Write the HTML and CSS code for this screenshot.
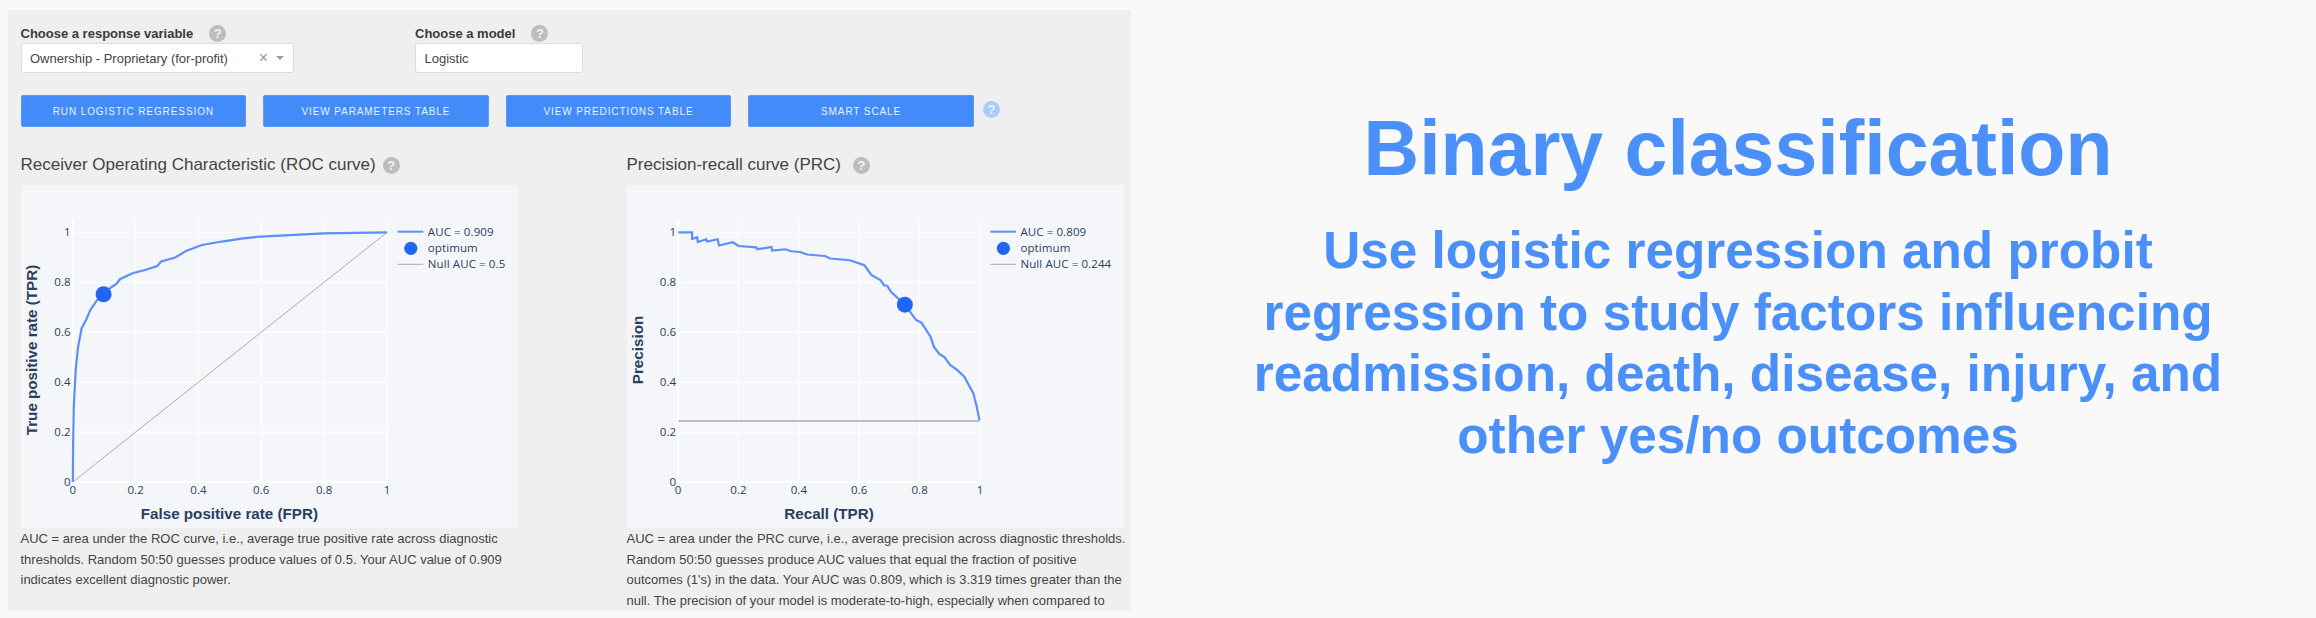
FILE: index.html
```html
<!DOCTYPE html>
<html lang="en">
<head>
  <meta charset="UTF-8">
  <meta name="viewport" content="width=device-width, initial-scale=1.0">
  <title>Binary classification</title>
  <link rel="stylesheet" href="styles.css">
</head>
<body>
  <main class="panel">
    <div class="fields">
      <div class="field field-response">
        <div class="field-label">Choose a response variable <span class="help help-label">?</span></div>
        <div class="select">
          <span class="select-value">Ownership - Proprietary (for-profit)</span>
          <span class="select-clear">×</span>
          <span class="select-caret"></span>
        </div>
      </div>
      <div class="field field-model">
        <div class="field-label">Choose a model <span class="help help-label">?</span></div>
        <div class="select">
          <span class="select-value">Logistic</span>
        </div>
      </div>
    </div>

    <div class="actions">
      <button class="btn">RUN LOGISTIC REGRESSION</button>
      <button class="btn">VIEW PARAMETERS TABLE</button>
      <button class="btn">VIEW PREDICTIONS TABLE</button>
      <button class="btn">SMART SCALE</button>
      <span class="help help-blue">?</span>
    </div>

    <div class="charts">
      <section class="chart-col">
        <h2 class="chart-title">Receiver Operating Characteristic (ROC curve) <span class="help">?</span></h2>
        <svg id="roc" class="plot" viewBox="0 0 497 343"></svg>
        <p class="caption">AUC = area under the ROC curve, i.e., average true positive rate across diagnostic thresholds. Random 50:50 guesses produce values of 0.5. Your AUC value of 0.909 indicates excellent diagnostic power.</p>
      </section>
      <section class="chart-col">
        <h2 class="chart-title">Precision-recall curve (PRC) <span class="help help-gap">?</span></h2>
        <svg id="prc" class="plot" viewBox="0 0 497 343"></svg>
        <p class="caption">AUC = area under the PRC curve, i.e., average precision across diagnostic thresholds. Random 50:50 guesses produce AUC values that equal the fraction of positive outcomes (1's) in the data. Your AUC was 0.809, which is 3.319 times greater than the null. The precision of your model is moderate-to-high, especially when compared to</p>
      </section>
    </div>
  </main>

  <aside class="promo">
    <h1 class="promo-title">Binary classification</h1>
    <p class="promo-text">Use logistic regression and probit regression to study factors influencing readmission, death, disease, injury, and other yes/no outcomes</p>
  </aside>

  <script src="chart.js"></script>
</body>
</html>
```

FILE: styles.css
```css
* {
  box-sizing: border-box;
}
body {
  margin: 0;
  height: 618px;
  overflow: hidden;
  display: flex;
  align-items: flex-start;
  font-family: "Liberation Sans", Arial, sans-serif;
  background-color: #f9f9f9;
  color: #444;
}

/* left app panel */
.panel {
  flex: none;
  width: 1123px;
  height: 601px;
  margin: 10px 0 0 8px;
  padding: 13px 0 0 12.5px;
  background-color: #efefef;
  overflow: hidden;
}
.fields {
  display: flex;
  gap: 121.5px;
}
.field-response {
  width: 273px;
}
.field-model {
  width: 168px;
}
.field-label {
  display: flex;
  align-items: center;
  height: 20px;
  font-size: 13px;
  font-weight: bold;
  color: #3a3a3a;
  white-space: nowrap;
}
.select {
  display: flex;
  align-items: center;
  height: 30px;
  padding: 0 8.5px;
  background-color: #fff;
  border: 1px solid #ddd;
  border-radius: 3px;
  font-size: 13px;
  color: #444;
}
.select-value {
  flex: 1;
}
.select-clear {
  font-size: 16px;
  color: #999;
  margin-right: 8px;
}
.select-caret {
  width: 0;
  height: 0;
  border-left: 4px solid transparent;
  border-right: 4px solid transparent;
  border-top: 4px solid #999;
}

.help {
  display: inline-flex;
  align-items: center;
  justify-content: center;
  width: 17px;
  height: 17px;
  border-radius: 50%;
  background-color: #bdbdbd;
  color: #f4f4f4;
  font-size: 13px;
  font-weight: bold;
  vertical-align: 1px;
}
.help-label {
  margin-left: 16px;
}
.help-gap {
  margin-left: 5px;
}
.help-blue {
  margin: 0 0 3px -8px;
  background-color: #a6cdf8;
}

.actions {
  display: flex;
  align-items: center;
  gap: 17px;
  margin-top: 22px;
}
.btn {
  width: 225.6px;
  height: 32px;
  padding: 0;
  background-color: #428bf9;
  border: 1px solid #5a98f5;
  border-radius: 2px;
  color: #eaf2fe;
  font-family: "Liberation Sans", Arial, sans-serif;
  font-size: 10px;
  letter-spacing: 0.9px;
}

.charts {
  display: flex;
  gap: 109px;
  margin-top: 27px;
}
.chart-col {
  width: 497px;
}
.chart-title {
  display: flex;
  align-items: center;
  gap: 7px;
  height: 22px;
  margin: 0;
  font-size: 17px;
  font-weight: normal;
  color: #444;
  white-space: nowrap;
}
.plot {
  display: block;
  width: 497px;
  height: 343px;
  margin-top: 9px;
  background-color: #f5f6f9;
}
.plot text {
  font-family: "Open Sans", sans-serif;
  font-size: 11.5px;
  letter-spacing: 0.1px;
  fill: #2a3f5f;
}
.plot .axis-title {
  font-family: "Liberation Sans", Arial, sans-serif;
  font-size: 15.2px;
  font-weight: bold;
  letter-spacing: 0;
}
.caption {
  width: 503px;
  margin: 0;
  padding-top: 1px;
  font-size: 13px;
  line-height: 20.5px;
  color: #444;
}

/* right side blurb */
.promo {
  flex: 1;
  padding: 103px 0 0 29px;
  text-align: center;
  color: #4a90f8;
}
.promo-title {
  margin: 0;
  font-size: 77px;
  line-height: 90px;
}
.promo-text {
  width: 1010px;
  margin: 27px auto 0;
  font-size: 51.3px;
  font-weight: bold;
  line-height: 61.7px;
}
```

FILE: chart.js
```js
// Curve points are in axis units, read off the original plots
var rocPoints = [
  [0, 0], [.001, .142], [.003, .302], [.010, .462], [.017, .542], [.028, .615], [.042, .649],
  [.056, .689], [.076, .726], [.098, .752], [.122, .780], [.139, .793], [.150, .812], [.190, .836],
  [.230, .849], [.269, .865], [.281, .883], [.326, .899], [.360, .925], [.411, .949], [.474, .963],
  [.542, .976], [.599, .983], [.735, .992], [.798, .996], [1, 1]
];
var prcPoints = [
  [0, 1], [.046, 1], [.046, .973], [.063, .980], [.065, .961], [.093, .972], [.096, .963],
  [.131, .972], [.135, .947], [.181, .960], [.2, .945], [.259, .940], [.262, .932], [.309, .941],
  [.311, .927], [.356, .932], [.374, .924], [.404, .921], [.427, .911], [.486, .905], [.504, .895],
  [.569, .888], [.617, .868], [.640, .829], [.670, .809], [.682, .788], [.693, .785], [.705, .762],
  [.751, .710], [.788, .649], [.806, .638], [.836, .582], [.847, .542], [.865, .513], [.883, .499],
  [.901, .469], [.924, .449], [.948, .422], [.978, .355], [.989, .302], [.998, .248]
];

var SVG_NS = 'http://www.w3.org/2000/svg';
var CURVE = '#5b8ff9';
var MARKER = '#2166f3';
var NULL_LINE = '#aaaaaa';
var TICKS = [0, .2, .4, .6, .8, 1];

function add(svg, tag, attrs, text) {
  var el = document.createElementNS(SVG_NS, tag);
  Object.keys(attrs).forEach(function (key) {
    el.setAttribute(key, attrs[key]);
  });
  if (text) el.textContent = text;
  svg.appendChild(el);
  return el;
}

function drawChart(id, cfg) {
  var svg = document.getElementById(id);
  var top = 34, y0 = 297, y1 = 47.3;
  var px = function (x) { return cfg.x0 + x * (cfg.x1 - cfg.x0); };
  var py = function (y) { return y0 + y * (y1 - y0); };

  // Grid and tick labels
  TICKS.forEach(function (t) {
    var zero = t === 0;
    add(svg, 'line', { x1: px(t), x2: px(t), y1: top, y2: y0, stroke: '#fff', 'stroke-width': zero ? 2 : 1 });
    add(svg, 'line', { x1: cfg.x0, x2: cfg.x1, y1: py(t), y2: py(t), stroke: '#fff', 'stroke-width': zero ? 2 : 1 });
    add(svg, 'text', { x: px(t), y: 309, 'text-anchor': 'middle' }, String(t));
    add(svg, 'text', { x: cfg.x0 - 2, y: py(t) + 4, 'text-anchor': 'end' }, String(t));
  });

  // Null line sits under the curve
  add(svg, 'line', {
    x1: px(0), y1: py(cfg.nullFrom), x2: px(1), y2: py(cfg.nullTo),
    stroke: NULL_LINE, 'stroke-width': cfg.nullWidth
  });
  add(svg, 'polyline', {
    points: cfg.points.map(function (p) { return px(p[0]) + ',' + py(p[1]); }).join(' '),
    fill: 'none', stroke: CURVE, 'stroke-width': 2.2
  });
  add(svg, 'circle', { cx: px(cfg.optimum[0]), cy: py(cfg.optimum[1]), r: 8, fill: MARKER });

  // Legend
  var lx = cfg.legendX;
  add(svg, 'line', { x1: lx, x2: lx + 25.5, y1: 46.7, y2: 46.7, stroke: CURVE, 'stroke-width': 2 });
  add(svg, 'text', { x: lx + 30, y: 50.7 }, cfg.aucLabel);
  add(svg, 'circle', { cx: lx + 13, cy: 63.3, r: 6.6, fill: MARKER });
  add(svg, 'text', { x: lx + 30, y: 67.3 }, 'optimum');
  add(svg, 'line', { x1: lx, x2: lx + 25.5, y1: 79.3, y2: 79.3, stroke: NULL_LINE, 'stroke-width': 1 });
  add(svg, 'text', { x: lx + 30, y: 83.3 }, cfg.nullLabel);

  // Axis titles
  add(svg, 'text', { class: 'axis-title', x: cfg.titleX, y: 334, 'text-anchor': 'middle' }, cfg.xTitle);
  add(svg, 'text', {
    class: 'axis-title', x: 0, y: 0, 'text-anchor': 'middle',
    transform: 'translate(15.5,165) rotate(-90)'
  }, cfg.yTitle);
}

drawChart('roc', {
  x0: 51.8, x1: 366, points: rocPoints, optimum: [.098, .752],
  nullFrom: 0, nullTo: 1, nullWidth: 1, legendX: 376.8,
  aucLabel: 'AUC = 0.909', nullLabel: 'Null AUC = 0.5',
  xTitle: 'False positive rate (FPR)', yTitle: 'True positive rate (TPR)', titleX: 208.4
});
drawChart('prc', {
  x0: 51.2, x1: 353, points: prcPoints, optimum: [.751, .710],
  nullFrom: .244, nullTo: .244, nullWidth: 1.5, legendX: 363.4,
  aucLabel: 'AUC = 0.809', nullLabel: 'Null AUC = 0.244',
  xTitle: 'Recall (TPR)', yTitle: 'Precision', titleX: 202
});
```
